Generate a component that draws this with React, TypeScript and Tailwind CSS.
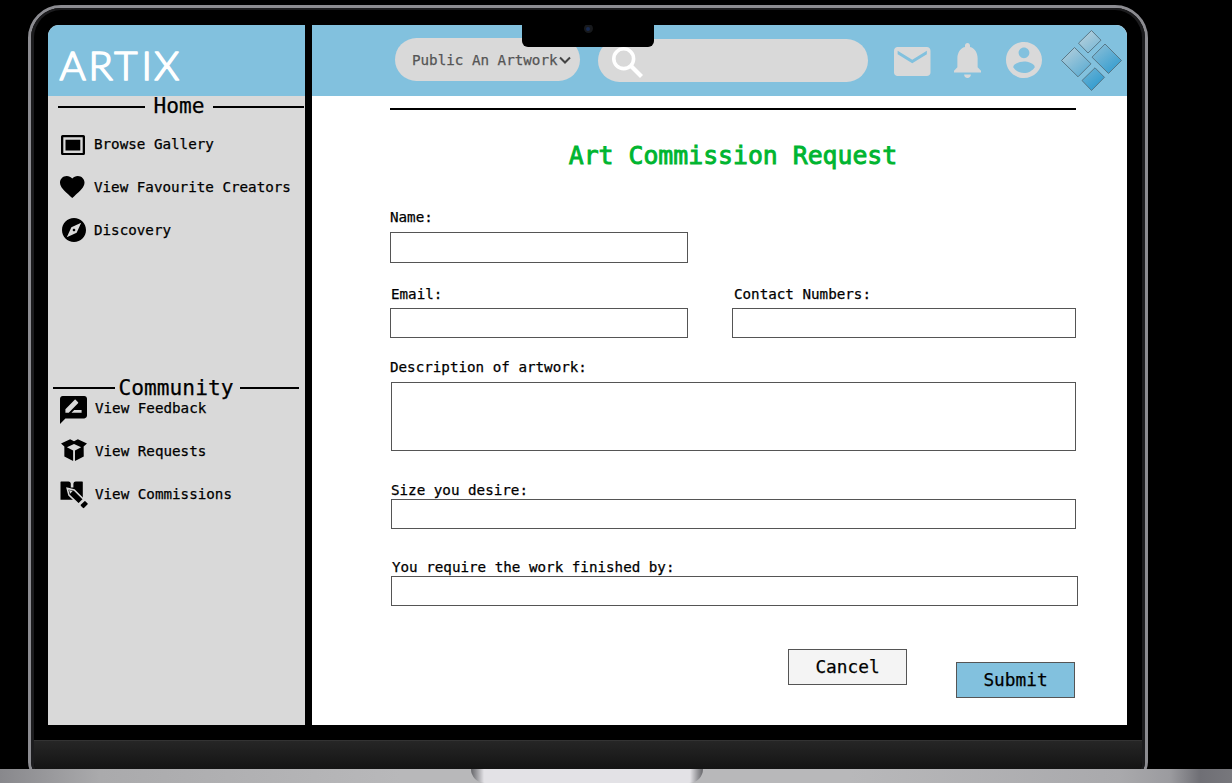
import type { ReactNode } from "react";

function Glyph({ d, box, className }: { d: string; box: string; className: string }) {
  return (
    <svg viewBox={box} preserveAspectRatio="none" className={`block shrink-0 ${className}`} fill="currentColor">
      <path d={d} fillRule="evenodd" />
    </svg>
  );
}

const MAIL = "M20 4H4c-1.1 0-2 .9-2 2v12c0 1.1.9 2 2 2h16c1.1 0 2-.9 2-2V6c0-1.1-.9-2-2-2zm0 4l-8 5-8-5V6l8 5 8-5v2z";
const BELL = "M12 22c1.1 0 2-.9 2-2h-4c0 1.1.89 2 2 2zm6-6v-5c0-3.07-1.64-5.64-4.5-6.32V4c0-.83-.67-1.5-1.5-1.5s-1.500.67-1.500 1.500v.68C7.630 5.360 6 7.920 6 11v5l-2 2v1h16v-1l-2-2z";
const ACCOUNT = "M12 2C6.48 2 2 6.48 2 12s4.480 10 10 10 10-4.480 10-10S17.520 2 12 2zm0 3c1.660 0 3 1.340 3 3s-1.340 3-3 3-3-1.340-3-3 1.340-3 3-3zm0 14.200c-2.500 0-4.710-1.280-6-3.220.030-1.990 4-3.080 6-3.080 1.990 0 5.970 1.090 6 3.080-1.290 1.940-3.500 3.220-6 3.220z";
const HEART = "M12 21.350l-1.450-1.320C5.400 15.360 2 12.280 2 8.500 2 5.420 4.420 3 7.500 3c1.740 0 3.410.81 4.500 2.090C13.090 3.810 14.760 3 16.500 3 19.580 3 22 5.420 22 8.500c0 3.780-3.400 6.860-8.550 11.540L12 21.350z";
const COMPASS = "M12 10.900c-.61 0-1.100.49-1.100 1.100s.49 1.100 1.100 1.100 1.100-.49 1.100-1.100-.49-1.100-1.100-1.100zM12 2C6.480 2 2 6.480 2 12s4.480 10 10 10 10-4.480 10-10S17.520 2 12 2zm2.190 12.190L6 18l3.810-8.190L18 6l-3.810 8.190z";
const REVIEW = "M20 2H4c-1.100 0-1.990.9-1.990 2L2 22l4-4h14c1.100 0 2-.9 2-2V4c0-1.100-.9-2-2-2zM6 14v-2.470l6.880-6.880c.2-.2.51-.2.71 0l1.770 1.770c.2.2.2.51 0 .71L8.470 14H6zm12 0h-7.500l2-2H18v2z";
const FRAME = "M1.600 0h20.800a1.600 1.600 0 0 1 1.600 1.600v16.800a1.600 1.600 0 0 1-1.600 1.600H1.600A1.600 1.600 0 0 1 0 18.400V1.600A1.600 1.600 0 0 1 1.600 0zM2.300 2.300v15.600h19.400V2.300zM4.500 4.800h14.800v10.700H4.500z";
const BOX = "M0 4.400L9.300.2l3.900 2 3.900-2 9.300 4.200-3.400 3.200.1 9.800L14.200 22V11.500L20.500 8.300 13.200 5 6 8.300l6.300 3.200V22L3.400 17.400V7.600z";

function SearchIcon() {
  return (
    <svg viewBox="0 0 31 31" className="block h-[31px] w-[31px] shrink-0" fill="none" stroke="#fff">
      <circle cx="11.700" cy="11.700" r="9.900" strokeWidth="3.600" />
      <path d="M19 19l10.500 10.500" strokeWidth="4.200" />
    </svg>
  );
}

function CommissionIcon() {
  return (
    <svg viewBox="0 0 28 28" className="-mr-px block h-7 w-7 shrink-0">
      <path d="M.5 1q0-.6.600-.6H8.500q2 0 2.300 2.200V6.500h2.600V2.600Q13.700.4 15.700.4h6.500q.6 0 .6.600V17H13v1.800H.5z" fill="#000" />
      <path d="M7.200 7.400l7 1.500 9.300 9.300-5 5L9 14.200z" fill="#000" stroke="#d9d9d9" strokeWidth="1.600" />
      <path d="M9 9l3.600.9-2.500 2.800z" fill="#d9d9d9" />
      <path d="M21.700 24.300l3.200-3.200 1.800 1.800-3.200 3.200z" fill="#000" stroke="#000" strokeWidth="2" strokeLinejoin="round" />
    </svg>
  );
}

function ArtixMark() {
  return (
    <svg viewBox="0 0 62 62" className="block h-[62px] w-[62px] shrink-0" stroke="#52717f" strokeWidth=".9">
      <defs>
        <linearGradient id="mark" gradientUnits="userSpaceOnUse" x1="14" y1="10" x2="44" y2="48">
          <stop stopColor="#b2cedb" />
          <stop offset="1" stopColor="#3a9fd0" />
        </linearGradient>
      </defs>
      <g fill="url(#mark)">
        <path d="M30.500 .5l9.500 9.700L27 23 17.500 13.200z" />
        <path d="M44 14L60.500 30.500 47.500 43.500 31 27.200z" />
        <path d="M13.500 17.500l16.500 16.300-13 13L.5 30.500z" />
        <path d="M34 37.800l9.500 9.500L30.500 60.500l-9.500-10z" />
      </g>
    </svg>
  );
}

function Item({ children, icon }: { children: ReactNode; icon: ReactNode }) {
  return (
    <li className="flex h-[43px] items-center">
      <span className="flex w-[35px] shrink-0 items-center justify-start">{icon}</span>
      <span className="whitespace-pre pb-[2px]">{children}</span>
    </li>
  );
}

const field = "block border border-[#555] bg-white outline-none resize-none";

export default function App() {
  return (
    <div className="flex h-[783px] w-[1232px] flex-col overflow-hidden bg-black pt-[5px] text-[14.22px] leading-[18px] text-black [-webkit-text-stroke:0.250px] [font-family:'DejaVu_Sans_Mono',monospace]">
      <div className="h-[764px] shrink-0 overflow-hidden pl-7">
        <div className="h-[780px] w-[1120px] rounded-t-[33px] rounded-b-[24px] border-[3px] border-[#8c8c91] bg-black">
          <div className="flex h-full flex-col overflow-hidden rounded-t-[30px] rounded-b-[21px] border-x-[3px] border-t-2 border-[#1c1c1e]">
            <div className="relative ml-[14px] mt-[15px] flex h-[700px] w-[1079px] shrink-0 gap-[7px] overflow-hidden rounded-t-[11px]">
              <aside className="w-[257px] bg-[#d9d9d9]">
                <div className="h-[71px] bg-[#82c1de] pl-[10px] pt-2">
                  <svg className="block h-[60px] w-40 overflow-visible" fill="#fff" stroke="#fff" strokeWidth="1.700" strokeLinejoin="round" strokeLinecap="round">
                    <text x="1.600 30.500 56.200 83.500 96.300" y="47" fontFamily="Lato" fontWeight="300" fontSize="40">ARTIX</text>
                  </svg>
                </div>
                <div className="flex h-[27px] items-center pl-[10px] pr-px pb-[5px] text-[21.2px]">
                  <span className="h-0.5 w-[87px] bg-black" />
                  <h2 className="w-[68px] pb-0.5 text-center">Home</h2>
                  <span className="h-0.5 flex-1 bg-black" />
                </div>
                <ul className="pl-[11px]">
                  <Item icon={<Glyph d={FRAME} box="0 0 24 20" className="ml-[1.500px] h-5 w-6" />}>Browse Gallery</Item>
                  <Item icon={<Glyph d={HEART} box="2 3 20 18.350" className="mb-px ml-px h-[22px] w-[24.500px]" />}>View Favourite Creators</Item>
                  <Item icon={<Glyph d={COMPASS} box="2 2 20 20" className="mb-[2px] ml-[3px] h-6 w-6" />}>Discovery</Item>
                </ul>
                <div className="mt-[122px] flex h-[27px] items-center pl-[5px] pr-1.5 text-[21.2px]">
                  <span className="h-0.5 w-[62px] bg-black" />
                  <h2 className="w-[122px] text-center">Community</h2>
                  <span className="ml-[3px] h-0.5 flex-1 bg-black" />
                </div>
                <ul className="-mt-[14px] pl-3">
                  <Item icon={<Glyph d={REVIEW} box="2 2 20 20" className="mt-[3px] h-7 w-[27px]" />}>View Feedback</Item>
                  <Item icon={<Glyph d={BOX} box="0 0 26.400 22" className="mb-[3px] ml-px h-[22px] w-[26px]" />}>View Requests</Item>
                  <Item icon={<CommissionIcon />}>View Commissions</Item>
                </ul>
              </aside>
              <div className="flex flex-1 flex-col bg-white">
                <header className="flex h-[71px] shrink-0 items-start bg-[#82c1de] pl-[83px] pt-[5px]">
                  <button className="mt-2 flex h-[43px] w-[185px] items-center rounded-full bg-[#d9d9d9] pl-[17px] text-[#555]">
                    <span className="whitespace-pre">Public An Artwork</span>
                    <svg viewBox="0 0 12 8" className="ml-px h-2 w-3 shrink-0" fill="none" stroke="#444" strokeWidth="2"><path d="M1 1.500l5 5 5-5" /></svg>
                  </button>
                  <label className="ml-[18px] mt-[9px] flex h-[43px] w-[270px] rounded-full bg-[#d9d9d9] pl-[14px] pt-[8px] text-white">
                    <SearchIcon />
                  </label>
                  <div className="ml-[26px] mt-3 flex text-[#d9d9d9]">
                    <Glyph d={MAIL} box="2 4 20 16" className="mt-[4.500px] h-[29px] w-[36.500px]" />
                    <Glyph d={BELL} box="4 2.500 16 19.500" className="ml-[23.500px] mt-[1px] h-[35px] w-[27px]" />
                    <Glyph d={ACCOUNT} box="2 2 20 20" className="ml-[25px] h-9 w-9" />
                  </div>
                  <div className="ml-[19px]"><ArtixMark /></div>
                </header>
                <form className="pl-[78px]">
                  <div className="mt-3 h-0.5 w-[686px] bg-black" />
                  <h1 className="mt-[34px] w-[686px] text-center text-[24.800px] leading-6 text-[#00b530] [-webkit-text-stroke:0.900px_#00b530]">Art Commission Request</h1>
                  <label className="mt-10 block">Name:</label>
                  <input className={`${field} mt-[6px] h-[31px] w-[298px]`} />
                  <div className="mt-[22px] flex gap-[44px]">
                    <div>
                      <label className="block pl-px">Email:</label>
                      <input className={`${field} mt-[5px] h-[30px] w-[298px]`} />
                    </div>
                    <div>
                      <label className="block pl-0.5">Contact Numbers:</label>
                      <input className={`${field} mt-[5px] h-[30px] w-[344px]`} />
                    </div>
                  </div>
                  <label className="mt-5 block">Description of artwork:</label>
                  <textarea className={`${field} ml-px mt-[6px] h-[69px] w-[685px]`} />
                  <label className="ml-px mt-[30px] block">Size you desire:</label>
                  <input className={`${field} ml-px h-[30px] w-[685px]`} />
                  <label className="ml-px mt-[29px] block pl-px">You require the work finished by:</label>
                  <input className={`${field} ml-px h-[30px] w-[687px]`} />
                  <div className="mt-[43px] flex gap-[49px] pl-[398px] text-[17.800px]">
                    <button type="button" className="h-9 w-[119px] border border-[#555] bg-[#f4f4f4]">Cancel</button>
                    <button type="button" className="mt-[13px] h-9 w-[119px] border border-[#555] bg-[#82c1de]">Submit</button>
                  </div>
                </form>
              </div>
              <div className="absolute left-[474px] top-0 flex h-[22px] w-[132px] justify-center rounded-b-md bg-black">
                <span className="-mt-px flex h-[9px] w-[9px] items-center justify-center rounded-full bg-[#17191c]"><i className="h-1 w-1 rounded-full bg-[#17294f]" /></span>
              </div>
            </div>
            <div className="mt-[15px] h-[29px] shrink-0 border-t border-[#333] bg-linear-to-b from-[#262626] to-[#141414]" />
          </div>
        </div>
      </div>
      <div className="flex h-[14px] shrink-0 justify-center bg-[linear-gradient(90deg,#88888c_0,#aaaaac_100px,#b8b8ba_400px,#b8b8ba_850px,#a9a9ac_1120px,#9b9b9f_1170px,#6f6f75_1200px,#77777c_1232px)] pr-[58px]">
        <div className="h-[14px] w-[232px] rounded-b-[14px] bg-[linear-gradient(90deg,#66666a_0,#929296_5px,#e3e2e6_13px,#e3e2e6_219px,#929296_227px,#66666a_232px)]" />
      </div>
    </div>
  );
}
